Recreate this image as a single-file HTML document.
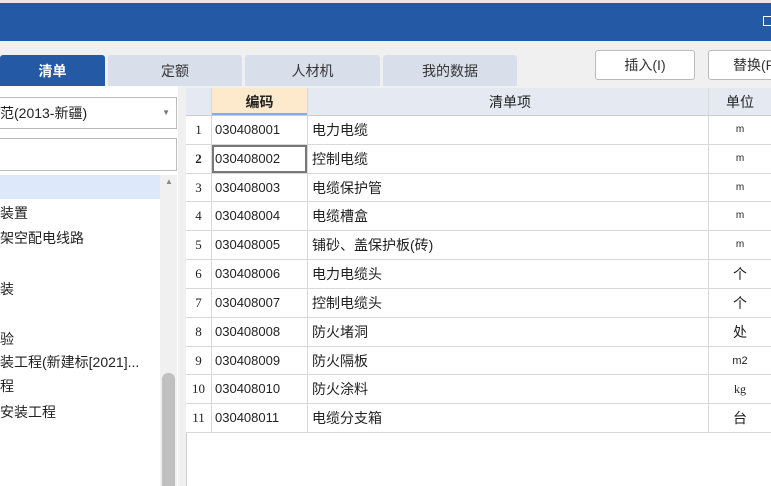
<!DOCTYPE html>
<html><head><meta charset="utf-8"><style>
*{margin:0;padding:0;box-sizing:border-box}
body{width:771px;height:486px;overflow:hidden;background:#f0f0f0;font-family:"Liberation Sans","Noto Sans CJK SC",sans-serif;font-size:14px;color:#222;position:relative}
.a{position:absolute}
.tab{position:absolute;top:55px;height:31px;background:#d9dfea;color:#333;text-align:center;line-height:33px;font-size:14px;border-radius:3px 3px 0 0}
.btn{position:absolute;top:50px;height:30px;background:#fff;border:1px solid #bbb;border-radius:3px;text-align:center;line-height:28px;font-size:14px;color:#333}
.li{position:absolute;left:0;font-size:14px;color:#222}
.r{position:absolute;left:186px;width:585px;height:29px;border-bottom:1px solid #d8d8d8;background:#fff}
.r div{position:absolute;top:0;bottom:0;line-height:28px;border-right:1px solid #d8d8d8}
.n{left:0;width:26px;text-align:center;font-family:"Liberation Serif",serif;font-size:13px}
.c{left:26px;width:96px;padding-left:3px;font-size:13px}
.m{left:122px;width:401px;padding-left:4px}
.u{left:523px;width:62px;text-align:center;border-right:none!important;font-size:14px}
.h28{height:28px}
</style></head><body>
<div class="a" style="left:0;top:0;width:771px;height:3px;background:#e8e8e8"></div>
<div class="a" style="left:0;top:3px;width:771px;height:38px;background:#245aa5"></div>
<div class="a" style="left:763px;top:16px;width:10px;height:10px;border:1px solid #fff"></div>
<div class="tab" style="left:0;width:105px;background:#245aa5;color:#fff;font-weight:bold">清单</div>
<div class="tab" style="left:108px;width:134px">定额</div>
<div class="tab" style="left:245px;width:135px">人材机</div>
<div class="tab" style="left:383px;width:134px">我的数据</div>
<div class="btn" style="left:595px;width:100px">插入(I)</div>
<div class="btn" style="left:708px;width:70px;text-align:left;padding-left:24px">替换(R</div>
<div class="a" style="left:0;top:86px;width:178px;height:400px;background:#fff"></div>
<div class="a" style="left:0;top:97px;width:177px;height:32px;border:1px solid #bbb;border-left:none;background:#fff;line-height:30px;font-size:14px">范(2013-新疆)<span style="position:absolute;right:6px;top:0;font-size:8px;color:#777">▼</span></div>
<div class="a" style="left:0;top:138px;width:177px;height:33px;border:1px solid #bbb;border-left:none;background:#fff"></div>
<div class="a" style="left:0;top:175px;width:160px;height:24px;background:#dde8fb"></div>
<div class="a" style="left:160px;top:175px;width:17px;height:311px;background:#f0f0f0"></div>
<div class="a" style="left:165px;top:177px;font-size:8px;color:#888">▲</div>
<div class="a" style="left:162px;top:373px;width:13px;height:113px;background:#c0c0c0;border-radius:6px 6px 0 0"></div>
<div class="li" style="top:203px">装置</div>
<div class="li" style="top:228px">架空配电线路</div>
<div class="li" style="top:279px">装</div>
<div class="li" style="top:329px">验</div>
<div class="li" style="top:352px">装工程(新建标[2021]...</div>
<div class="li" style="top:376px">程</div>
<div class="li" style="top:402px">安装工程</div>
<div class="a" style="left:178px;top:86px;width:8px;height:400px;background:#f0f0f0"></div>
<div class="a" style="left:186px;top:88px;width:585px;height:398px;background:#fff;border-left:1px solid #d0d0d0"></div>
<div class="r" style="top:88px;height:28px;background:#e4e9f2;border-bottom:1px solid #ccc">
<div class="n"></div>
<div class="c" style="background:#fde9cc;font-weight:bold;text-align:center;padding:0;font-size:14px;box-shadow:inset 0 -2px 0 #7aaef0">编码</div>
<div class="m" style="text-align:center">清单项</div>
<div class="u">单位</div></div>
<div class="r" style="top:116px"><div class="n">1</div><div class="c">030408001</div><div class="m">电力电缆</div><div class="u" style="font-size:10px">m</div></div>
<div class="r" style="top:145px"><div class="n" style="font-weight:bold">2</div><div class="c" style="box-shadow:inset 0 0 0 2px #777,inset 2px 0 0 #4a90e2">030408002</div><div class="m">控制电缆</div><div class="u" style="font-size:10px">m</div></div>
<div class="r h28" style="top:174px"><div class="n">3</div><div class="c">030408003</div><div class="m">电缆保护管</div><div class="u" style="font-size:10px">m</div></div>
<div class="r" style="top:202px"><div class="n">4</div><div class="c">030408004</div><div class="m">电缆槽盒</div><div class="u" style="font-size:10px">m</div></div>
<div class="r" style="top:231px"><div class="n">5</div><div class="c">030408005</div><div class="m">铺砂、盖保护板(砖)</div><div class="u" style="font-size:10px">m</div></div>
<div class="r" style="top:260px"><div class="n">6</div><div class="c">030408006</div><div class="m">电力电缆头</div><div class="u">个</div></div>
<div class="r" style="top:289px"><div class="n">7</div><div class="c">030408007</div><div class="m">控制电缆头</div><div class="u">个</div></div>
<div class="r" style="top:318px"><div class="n">8</div><div class="c">030408008</div><div class="m">防火堵洞</div><div class="u">处</div></div>
<div class="r h28" style="top:347px"><div class="n">9</div><div class="c">030408009</div><div class="m">防火隔板</div><div class="u" style="font-size:11px">m2</div></div>
<div class="r" style="top:375px"><div class="n">10</div><div class="c">030408010</div><div class="m">防火涂料</div><div class="u" style="font-size:12px;font-family:'Liberation Serif',serif">kg</div></div>
<div class="r" style="top:404px"><div class="n">11</div><div class="c">030408011</div><div class="m">电缆分支箱</div><div class="u">台</div></div>
</body></html>
